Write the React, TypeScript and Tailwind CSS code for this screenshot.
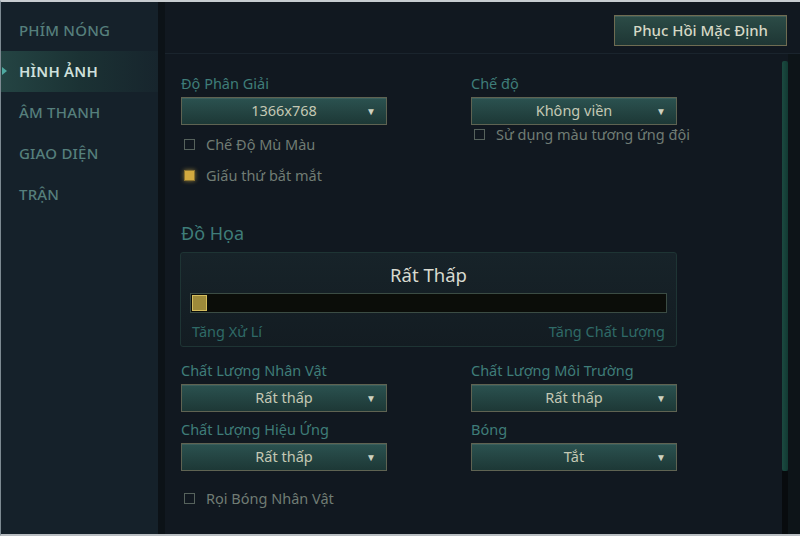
const font = { fontFamily: '"Noto Sans", "Liberation Sans", sans-serif' };

const NAV = ['PHÍM NÓNG', 'HÌNH ẢNH', 'ÂM THANH', 'GIAO DIỆN', 'TRẬN'];

const Select = ({ value }: { value: string }) => (
  <div className="relative flex h-[28px] w-[206px] items-center justify-center border border-[#5f6352] bg-gradient-to-b from-[#2b5250] to-[#1d3836] shadow-[inset_0_1px_0_rgba(255,255,255,0.08)]">
    <span className="text-[14.5px] text-[#c4c8b4]">{value}</span>
    <span className="absolute right-[10px] top-[6px] text-[10px] text-[#cfd2c0]">▼</span>
  </div>
);

const Check = ({ label, checked = false }: { label: string; checked?: boolean }) => (
  <div className="flex h-[20px] items-center gap-[11px] whitespace-nowrap">
    {checked ? (
      <span className="h-[11px] w-[11px] shrink-0 border border-[#8a7330] bg-[#d2a93f] shadow-[0_0_4px_rgba(220,180,70,0.6)]" />
    ) : (
      <span className="h-[11px] w-[11px] shrink-0 border border-[#56625c]" />
    )}
    <span className="text-[14.5px] leading-[20px] text-[#707c74]">{label}</span>
  </div>
);

const Label = ({ children }: { children: string }) => (
  <div className="h-[16px] whitespace-nowrap text-[14.5px] leading-[16px] text-[#3f7d79]">{children}</div>
);

export default function App() {
  return (
    <div
      style={font}
      className="flex h-[536px] w-[800px] overflow-hidden border-y-2 border-l border-t-[#c7ccd0] border-b-[#b9bec2] border-l-[#7d8a92] bg-[#111820]"
    >
      {/* Sidebar */}
      <div className="flex w-[157px] flex-col bg-[#15212a] pt-[8px]">
        {NAV.map((item, i) => (
          <div
            key={item}
            className={
              'relative flex h-[41px] items-center pl-[18px] text-[15px] tracking-[0.2px] ' +
              (i === 1
                ? 'bg-gradient-to-r from-[#244443] via-[#1b3234] to-[#17252d] font-semibold text-[#cfe0dc]'
                : 'font-medium text-[#557f7c]')
            }
          >
            {i === 1 && (
              <span className="absolute left-[1px] top-[16px] h-0 w-0 border-y-[4px] border-l-[5px] border-y-transparent border-l-[#4fa9a0]" />
            )}
            {item}
          </div>
        ))}
      </div>
      <div className="w-[7px] bg-[#0c1217]" />

      {/* Main panel */}
      <div className="flex flex-1 flex-col">
        <div className="flex h-[52px] items-start justify-end border-b border-[#1a242d] pt-[13px] pr-[13px]">
          <button className="h-[31px] border border-[#6f6c52] bg-gradient-to-b from-[#2c4c47] to-[#1e3634] px-[18px] text-[15px] font-medium text-[#d6d8c6] shadow-[inset_0_1px_0_rgba(255,255,255,0.1)]">
            Phục Hồi Mặc Định
          </button>
        </div>

        <div className="flex flex-1">
          <div className="flex-1 pl-[16px] pt-[21px]">
            <div className="grid grid-cols-[290px_206px]">
              <div>
                <Label>Độ Phân Giải</Label>
                <div className="mt-[6px]">
                  <Select value="1366x768" />
                </div>
                <div className="mt-[9px] pl-[3px]">
                  <Check label="Chế Độ Mù Màu" />
                </div>
                <div className="mt-[11px] pl-[3px]">
                  <Check label="Giấu thứ bắt mắt" checked />
                </div>
              </div>
              <div>
                <Label>Chế độ</Label>
                <div className="mt-[6px]">
                  <Select value="Không viền" />
                </div>
                <div className="mt-[-1px] pl-[3px]">
                  <Check label="Sử dụng màu tương ứng đội" />
                </div>
              </div>
            </div>

            <div className="mt-[36px] text-[18px] leading-[24px] text-[#3f7d79]">Đồ Họa</div>

            <div className="mt-[7px] ml-[-1px] h-[95px] w-[497px] rounded-[3px] border border-[#1e3434] bg-gradient-to-b from-[#172329] to-[#131c22] px-[9px] pt-[10px]">
              <div className="text-center text-[18.5px] leading-[24px] text-[#d8dad0]">Rất Thấp</div>
              <div className="relative mt-[6px] h-[20px] border border-[#3b4c44] bg-[#0b0d09]">
                <span className="absolute left-[1px] top-[1px] h-[16px] w-[15px] border border-[#d4bd5e] bg-[#9d8a3a]" />
              </div>
              <div className="mt-[7px] flex justify-between px-[2px] text-[14.5px] leading-[22px] text-[#2f6a67]">
                <span>Tăng Xử Lí</span>
                <span>Tăng Chất Lượng</span>
              </div>
            </div>

            <div className="mt-[15px] grid grid-cols-[290px_206px] gap-y-[9px]">
              <div>
                <Label>Chất Lượng Nhân Vật</Label>
                <div className="mt-[6px]">
                  <Select value="Rất thấp" />
                </div>
              </div>
              <div>
                <Label>Chất Lượng Môi Trường</Label>
                <div className="mt-[6px]">
                  <Select value="Rất thấp" />
                </div>
              </div>
              <div>
                <Label>Chất Lượng Hiệu Ứng</Label>
                <div className="mt-[6px]">
                  <Select value="Rất thấp" />
                </div>
              </div>
              <div>
                <Label>Bóng</Label>
                <div className="mt-[6px]">
                  <Select value="Tắt" />
                </div>
              </div>
            </div>

            <div className="mt-[17px] pl-[3px]">
              <Check label="Rọi Bóng Nhân Vật" />
            </div>
          </div>

          {/* Scrollbar */}
          <div className="flex w-[6px] flex-col pt-[7px]">
            <div className="h-[410px] rounded-[2px] bg-gradient-to-r from-[#1b4a40] to-[#123a33]" />
            <div className="flex-1 bg-[#080b0e]" />
          </div>
          <div className="w-[12px] bg-[#0d1418]" />
        </div>
      </div>
    </div>
  );
}
